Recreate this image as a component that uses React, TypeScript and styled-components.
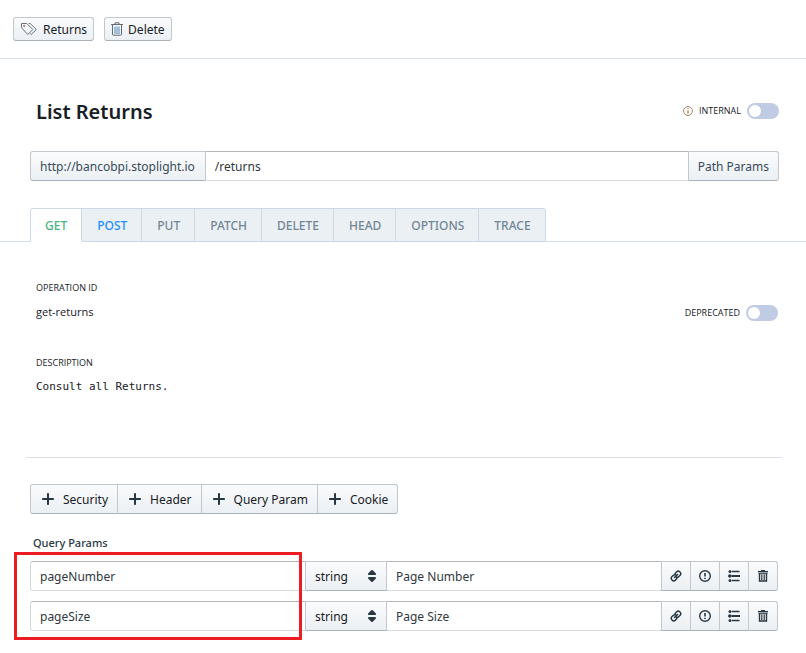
import React, { useState } from "react";
import styled, { createGlobalStyle, css } from "styled-components";

const GlobalStyle = createGlobalStyle`
  *, *::before, *::after { box-sizing: border-box; }
  body {
    margin: 0;
    background: #fff;
    color: #182026;
    font-family: "Noto Sans", "Open Sans", sans-serif;
    font-size: 12px;
    line-height: 18px;
  }
  button, input, select, textarea { font: inherit; color: inherit; margin: 0; }
`;

const raised = css`
  border: 1px solid #c3c8cd;
  border-bottom-color: #abb2b8;
  background: linear-gradient(#fafbfc, #ebf0f4);
`;

const Toolbar = styled.header`
  display: flex;
  gap: 10px;
  padding: 17px 13px;
  border-bottom: 1px solid #d8dfeb;
`;

const ToolButton = styled.button`
  ${raised}
  display: flex;
  align-items: center;
  gap: 5px;
  height: 24px;
  padding: 0 6px;
  border-radius: 3px;
`;

const ButtonText = styled.span`
  padding-top: 2px;
`;

const TitleRow = styled.section`
  display: flex;
  align-items: center;
  justify-content: space-between;
  padding: 36px 27px 0 36px;
`;

const Title = styled.h1`
  margin: 0;
  padding-top: 2px;
  font-size: 20px;
  line-height: 30px;
  font-weight: 600;
`;

const SwitchLabel = styled.label`
  display: flex;
  align-items: center;
  gap: 6px;
  font-family: "Open Sans", sans-serif;
  font-size: 9px;
  line-height: 16px;
`;

const Switch = styled.input`
  appearance: none;
  width: 32px;
  height: 16px;
  padding: 2px;
  border-radius: 8px;
  background: #c0cce4;
  &::before {
    content: "";
    display: block;
    width: 12px;
    height: 12px;
    border-radius: 50%;
    background: #fff;
  }
  &:checked { background: #5c7cc0; }
  &:checked::before { margin-left: 16px; }
`;

const PathRow = styled.section`
  display: flex;
  height: 30px;
  margin: 24px 27px 27px 30px;
`;

const Prefix = styled.label`
  ${raised}
  display: flex;
  align-items: center;
  padding: 2px 10px 0 9px;
  border-radius: 3px 0 0 3px;
  color: #394b59;
`;

const Field = styled.input<{ $first?: boolean }>`
  flex: 1 1 0;
  min-width: 0;
  padding: 2px 9px 0;
  border: solid;
  border-width: 1px 0 1px ${(p) => (p.$first ? "1px" : "0")};
  border-color: #b4b7b9 #d5d8da #d9dbdc;
  border-radius: ${(p) => (p.$first ? "3px 0 0 3px" : "0")};
  outline: 0;
  background: #fff;
  color: #30373d;
`;

const PathButton = styled.button`
  ${raised}
  padding: 2px 9px 0;
  border-radius: 0 3px 3px 0;
  color: #394b59;
`;

const Tabs = styled.nav`
  display: flex;
  padding-left: 30px;
  border-bottom: 1px solid #d8dfeb;
`;

const Tab = styled.button<{ $active: boolean; $color: string }>`
  height: 34px;
  margin-bottom: -1px;
  padding: 2px 14px 0 15px;
  border: 1px solid #ced9e8;
  border-left-width: 0;
  background: #ebf0f4;
  color: ${(p) => p.$color};
  font-size: 12px;
  font-weight: 500;
  &:first-child { padding-left: 14px; border-left-width: 1px; border-radius: 3px 0 0 0; }
  &:last-child { border-radius: 0 3px 0 0; }
  ${(p) => p.$active && css`background: #fff; border-bottom-color: #fff;`}
`;

const Details = styled.section`
  margin: 0 24px 0 26px;
  padding: 38px 4px 61px 10px;
  border-bottom: 1px solid #dcdfe8;
`;

const DetailRow = styled.div`
  display: flex;
  align-items: flex-end;
  justify-content: space-between;
  margin-bottom: 34px;
`;

const Stack = styled.div`
  display: flex;
  flex-direction: column;
  flex: 1;
`;

const Caption = styled.label`
  font-family: "Open Sans", sans-serif;
  font-size: 9px;
  line-height: 16px;
`;

const PlainInput = styled.input`
  height: 18px;
  margin-top: 7px;
  padding: 0;
  border: 0;
  outline: 0;
  background: none;
  font-family: "Open Sans", sans-serif;
  font-size: 11px;
  font-weight: 500;
`;

const Description = styled.textarea`
  height: 18px;
  margin-top: 7px;
  padding: 0;
  border: 0;
  outline: 0;
  resize: none;
  background: none;
  font-family: "DejaVu Sans Mono", monospace;
  font-size: 11px;
`;

const Group = styled.div`
  display: flex;
  margin: 26px 30px 0;
`;

const AddButton = styled.button`
  ${raised}
  display: flex;
  align-items: center;
  gap: 7px;
  height: 30px;
  padding: 0 9px;
  border-left-width: 0;
  &:first-child { border-left-width: 1px; border-radius: 3px 0 0 3px; }
  &:last-child { border-radius: 0 3px 3px 0; }
`;

const SectionTitle = styled.h2`
  margin: 20px 33px 9px;
  font-size: 11px;
  line-height: 18px;
  font-weight: 500;
  color: #293742;
`;

const Params = styled.section`
  position: relative;
  display: flex;
  flex-direction: column;
  gap: 10px;
  padding: 0 28px 22px 30px;
`;

const ParamRow = styled.div`
  display: flex;
  height: 30px;
`;

const SelectBox = styled.div`
  ${raised}
  display: flex;
  align-items: center;
  flex: 0 0 82px;
  padding-right: 6px;
`;

const Select = styled.select`
  appearance: none;
  flex: 1;
  min-width: 0;
  height: 28px;
  padding: 2px 9px 0;
  border: 0;
  outline: 0;
  background: none;
`;

const IconButton = styled.button`
  ${raised}
  display: grid;
  place-items: center;
  flex: 0 0 29px;
  padding: 0;
  border-right-width: 0;
  color: #293742;
  &:last-child { flex-basis: 30px; border-right-width: 1px; border-radius: 0 3px 3px 0; }
`;

const Highlight = styled.div`
  position: absolute;
  top: -9px;
  left: 14px;
  width: 288px;
  height: 88px;
  border: 3px solid #ed1c24;
  pointer-events: none;
`;

const TagsIcon = () => (
  <svg width="18" height="16" viewBox="0 0 18 16" fill="none" stroke="#69727b" strokeLinejoin="round">
    <path d="M1.500 2.500v4.200l6.300 6.800 5-5-6-6z" />
    <path d="M8.800 2.500h1.400l6.200 6-5.200 5-1-.9" />
    <circle cx="4.200" cy="5" r=".8" fill="#a07060" stroke="#a07060" strokeWidth=".5" />
  </svg>
);

const BinIcon = () => (
  <svg width="12" height="14" viewBox="0 0 12 14" fill="none">
    <path d="M0 2.500h12M4 2V.8h4V2M1.500 3v9.200q0 1 1 1h7q1 0 1-1V3" stroke="#626a73" />
    <path d="M4 4.500V12M6 4.500V12M8 4.500V12" stroke="#5688bd" />
  </svg>
);

const InfoIcon = () => (
  <svg width="10" height="10" viewBox="0 0 9 9" fill="none" stroke="#92775f">
    <circle cx="4.500" cy="4.500" r="4" strokeWidth=".8" />
    <path d="M4.500 1.900v1M4.500 3.800v3.100" stroke="#c07a28" />
  </svg>
);

const PlusIcon = () => (
  <svg width="16" height="16" viewBox="0 0 16 16" fill="#293742">
    <path d="M13 7H9V3c0-.55-.45-1-1-1s-1 .45-1 1v4H3c-.55 0-1 .45-1 1s.45 1 1 1h4v4c0 .55.45 1 1 1s1-.45 1-1V9h4c.55 0 1-.45 1-1s-.45-1-1-1z" />
  </svg>
);

const CaretsIcon = () => (
  <svg width="16" height="16" viewBox="0 0 16 16" fill="#293742">
    <path d="M5 7h6a1 1 0 00.71-1.71l-3-3a1 1 0 00-1.42 0l-3 3A1 1 0 005 7zm6 2H5a1 1 0 00-.71 1.71l3 3a1 1 0 001.42 0l3-3A1 1 0 0011 9z" />
  </svg>
);

const LinkIcon = () => (
  <svg width="12" height="12" viewBox="0 0 12 12" fill="none" stroke="currentColor" strokeWidth="1.500" strokeLinecap="round">
    <path d="M5.100 3.500l1.600-1.700a2 2 0 013 0l.5.5a2 2 0 010 2.900L8.500 6.800q-1.300 1-2.700 0" />
    <path d="M6.900 8.500l-1.600 1.700a2 2 0 01-3 0l-.5-.5a2 2 0 010-2.900l1.700-1.600q1.300-1 2.700 0" />
    <path d="M4.500 7.500l3-3" />
  </svg>
);

const AlertIcon = () => (
  <svg width="12" height="12" viewBox="0 0 12 12" fill="none" stroke="currentColor">
    <circle cx="6" cy="6" r="5.300" strokeWidth="1.400" />
    <path d="M6 2.900v3.600M6 7.700v1.400" strokeWidth="1.600" />
  </svg>
);

const ListIcon = () => (
  <svg width="12" height="12" viewBox="0 0 12 12" fill="currentColor">
    <circle cx="2" cy="1.500" r="1.500" />
    <circle cx="1.800" cy="6" r="1.800" />
    <circle cx="2" cy="10.500" r="1.500" />
    <path d="M4 .8h7.500v1.400H4zM3.500 4.900H12v2.200H3.500zM4 9.800h7.500v1.400H4z" />
  </svg>
);

const TrashIcon = () => (
  <svg width="12" height="12" viewBox="0 0 12 12" fill="none" stroke="currentColor">
    <path d="M1 1.700h10" strokeWidth="1.500" />
    <path d="M4 .5h4M1.500 3.700h9" />
    <path d="M2.500 3.700v7.300h7V3.700" strokeWidth="1.400" />
    <path d="M4.500 4.500v5.500M6 4.500v5.500M7.500 4.500v5.500" strokeWidth=".8" />
  </svg>
);

const methods = [
  { name: "GET", color: "#4db380" },
  { name: "POST", color: "#1f8ffb" },
  ...["PUT", "PATCH", "DELETE", "HEAD", "OPTIONS", "TRACE"].map((name) => ({ name, color: "#738694" })),
];

const params = [
  { name: "pageNumber", description: "Page Number" },
  { name: "pageSize", description: "Page Size" },
];

const actions = [
  { label: "Reference", Icon: LinkIcon },
  { label: "Required", Icon: AlertIcon },
  { label: "Properties", Icon: ListIcon },
  { label: "Remove", Icon: TrashIcon },
];

export default function App() {
  const [method, setMethod] = useState("GET");
  return (
    <>
      <GlobalStyle />
      <Toolbar>
        <ToolButton><TagsIcon /><ButtonText>Returns</ButtonText></ToolButton>
        <ToolButton><BinIcon /><ButtonText>Delete</ButtonText></ToolButton>
      </Toolbar>
      <main>
        <TitleRow>
          <Title>List Returns</Title>
          <SwitchLabel>
            <InfoIcon />INTERNAL
            <Switch type="checkbox" role="switch" />
          </SwitchLabel>
        </TitleRow>
        <PathRow>
          <Prefix htmlFor="path">http://bancobpi.stoplight.io</Prefix>
          <Field id="path" defaultValue="/returns" />
          <PathButton>Path Params</PathButton>
        </PathRow>
        <Tabs>
          {methods.map((m) => (
            <Tab key={m.name} $active={m.name === method} $color={m.color} onClick={() => setMethod(m.name)}>
              {m.name}
            </Tab>
          ))}
        </Tabs>
        <Details>
          <DetailRow>
            <Stack>
              <Caption htmlFor="operation">OPERATION ID</Caption>
              <PlainInput id="operation" defaultValue="get-returns" />
            </Stack>
            <SwitchLabel>
              DEPRECATED
              <Switch type="checkbox" role="switch" />
            </SwitchLabel>
          </DetailRow>
          <Stack>
            <Caption htmlFor="description">DESCRIPTION</Caption>
            <Description id="description" defaultValue="Consult all Returns." />
          </Stack>
        </Details>
        <Group>
          {["Security", "Header", "Query Param", "Cookie"].map((label) => (
            <AddButton key={label}><PlusIcon /><ButtonText>{label}</ButtonText></AddButton>
          ))}
        </Group>
        <SectionTitle>Query Params</SectionTitle>
        <Params>
          {params.map((p) => (
            <ParamRow key={p.name}>
              <Field $first aria-label="Name" defaultValue={p.name} />
              <SelectBox>
                <Select aria-label="Type" defaultValue="string">
                  <option>string</option>
                </Select>
                <CaretsIcon />
              </SelectBox>
              <Field aria-label="Description" defaultValue={p.description} />
              {actions.map(({ label, Icon }) => (
                <IconButton key={label} aria-label={label}><Icon /></IconButton>
              ))}
            </ParamRow>
          ))}
          <Highlight />
        </Params>
      </main>
    </>
  );
}
